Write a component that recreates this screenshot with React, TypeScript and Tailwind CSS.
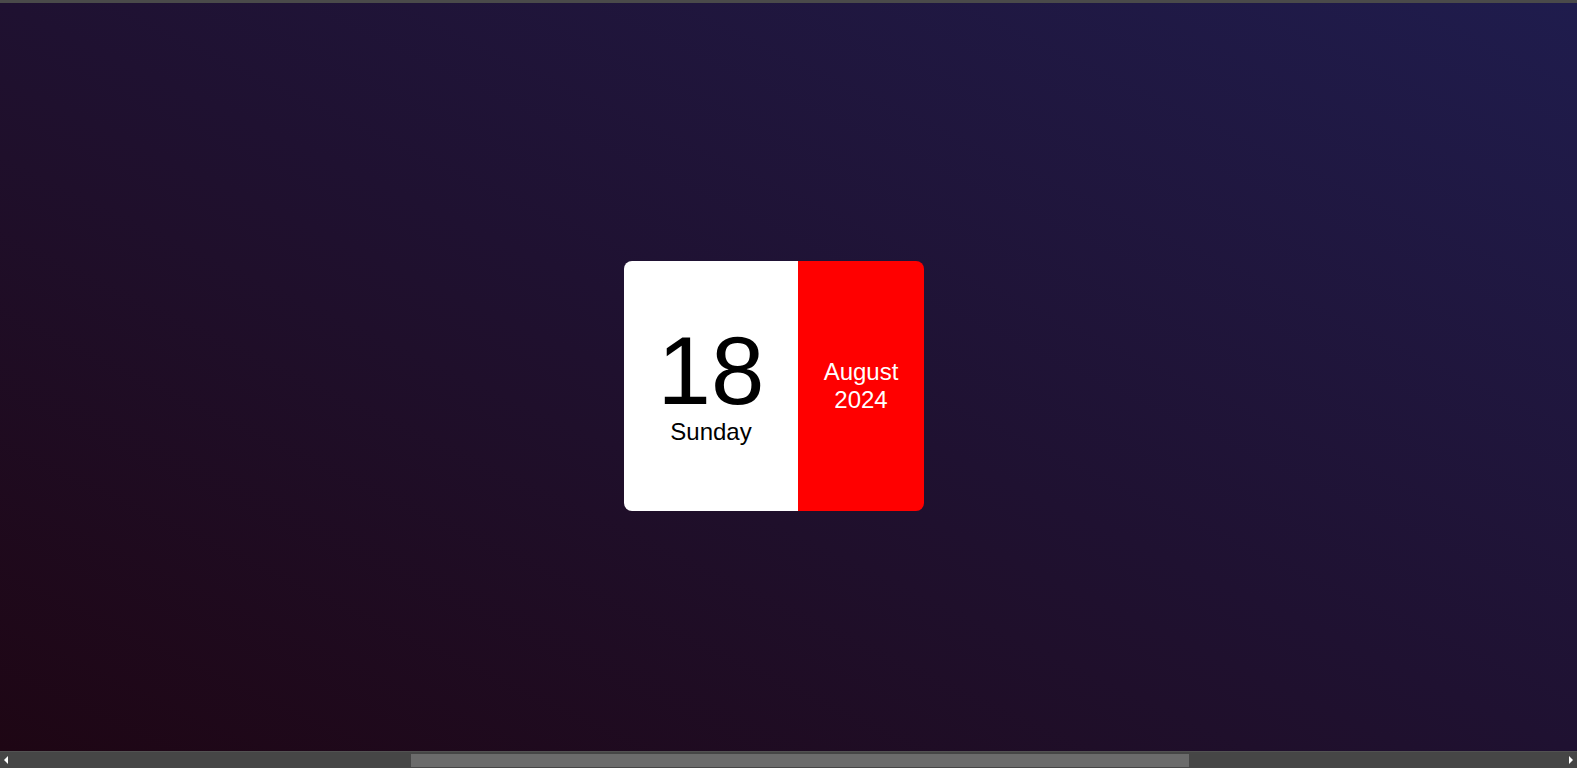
import React from "react";

const App = () => {
  return (
    <div className="h-screen w-full flex flex-col overflow-hidden font-['Liberation_Sans',Arial,sans-serif]">
      <div className="h-[3px] bg-[#4a4a4a] shrink-0"></div>

      <main className="flex-1 bg-linear-to-tr from-[#1e0614] via-[#1f1131] to-[#1f1c4d] pl-[624px] pt-[258px]">
        <div className="flex w-[300px] h-[250px] rounded-lg overflow-hidden">
          <div className="w-[174px] bg-white flex flex-col items-center pt-[65px] text-black">
            <span className="text-[96px] leading-[90px]">18</span>
            <span className="text-2xl leading-[20px] mt-[6px]">Sunday</span>
          </div>
          <div className="flex-1 bg-[#ff0000] flex flex-col items-center justify-center text-white text-2xl leading-7">
            <span>August</span>
            <span>2024</span>
          </div>
        </div>
      </main>

      <div className="h-[17px] shrink-0 bg-[#464646] border-t border-[#525252] flex items-center">
        <div className="w-[12px] flex justify-center">
          <div className="w-0 h-0 border-y-[4px] border-y-transparent border-r-[4px] border-r-white"></div>
        </div>
        <div className="flex-1 h-full flex items-center">
          <div className="ml-[399px] w-[778px] h-[13px] bg-[#6b6b6b]"></div>
        </div>
        <div className="w-[12px] flex justify-center">
          <div className="w-0 h-0 border-y-[4px] border-y-transparent border-l-[4px] border-l-white"></div>
        </div>
      </div>
    </div>
  );
};

export default App;
